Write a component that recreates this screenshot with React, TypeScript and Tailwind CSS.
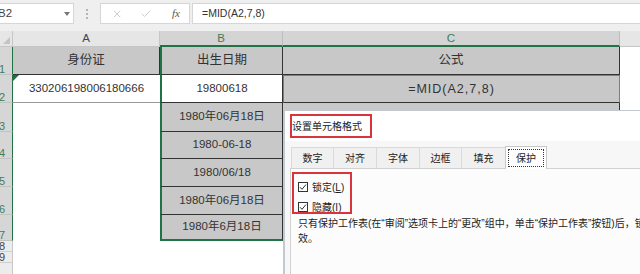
import React from "react";
import { X, Check } from "lucide-react";

const FONT = "font-['Liberation_Sans','Noto_Sans_CJK_SC',sans-serif]";

function RowHead({ label, h, sel }: { label: string; h: string; sel: boolean }) {
  return (
    <div
      className={`w-[13px] shrink-0 ${h} flex items-end overflow-hidden ${
        sel
          ? "bg-[#d6d6d6] border-r border-r-[#217346] border-b border-b-[#c2c2c2] text-[#3f7d5c]"
          : "bg-[#ececec] border-r border-r-[#c8c8c8] border-b border-b-[#cfcfcf] text-[#444]"
      }`}
    >
      <span className="ml-[-1px] text-[11px] leading-[12px] mb-[-1px]">{label}</span>
    </div>
  );
}

function BCell({ text, h, last }: { text: string; h: string; last?: boolean }) {
  return (
    <div
      className={`w-[123px] shrink-0 ${h} bg-[#c8c8c8] border-l-2 border-l-[#217346] border-r border-r-[#333] ${
        last ? "border-b-2 border-b-[#217346]" : "border-b border-b-[#333]"
      } flex items-center justify-center text-[11.5px] text-[#333]`}
    >
      {text}
    </div>
  );
}

function CheckBox() {
  return (
    <div className="w-[10px] h-[10px] border border-[#333] bg-white flex items-center justify-center">
      <svg width="8" height="8" viewBox="0 0 8 8">
        <path d="M1 4.2 L3 6.3 L7 1.5" fill="none" stroke="#333" strokeWidth="1" />
      </svg>
    </div>
  );
}

export default function App() {
  const tabs = [
    { t: "数字", w: "w-[42px]" },
    { t: "对齐", w: "w-[43px]" },
    { t: "字体", w: "w-[43px]" },
    { t: "边框", w: "w-[42px]" },
    { t: "填充", w: "w-[44px]" },
  ];
  const bRows = [
    { n: "3", h: "h-[29px]", t: "1980年06月18日" },
    { n: "4", h: "h-[27px]", t: "1980-06-18" },
    { n: "5", h: "h-[28px]", t: "1980/06/18" },
    { n: "6", h: "h-[28px]", t: "1980年06月18日" },
    { n: "7", h: "h-[26px]", t: "1980年6月18日" },
  ];
  return (
    <div className={`relative w-[640px] h-[274px] overflow-hidden bg-white ${FONT} text-[#333]`}>
      {/* formula bar */}
      <div className="flex h-[31px] bg-[#efefef] pt-[3px]">
        <div className="w-[74px] h-[21px] bg-white border-y border-r border-[#d6d6d6] flex items-center justify-between pr-[3px]">
          <span className="ml-[-2px] text-[11.5px] text-[#444]">B2</span>
          <span className="w-0 h-0 border-x-[3px] border-x-transparent border-t-[4px] border-t-[#777]" />
        </div>
        <div className="w-[26px] h-[21px] flex flex-col items-center justify-center gap-[2px]">
          <span className="w-[2px] h-[2px] bg-[#b5b5b5]" />
          <span className="w-[2px] h-[2px] bg-[#b5b5b5]" />
          <span className="w-[2px] h-[2px] bg-[#b5b5b5]" />
        </div>
        <div className="w-[90px] h-[21px] bg-white border border-[#d6d6d6] flex items-center">
          <X size={12} strokeWidth={1.5} color="#bdbdbd" className="ml-[10px]" />
          <Check size={12} strokeWidth={1.5} color="#bdbdbd" className="ml-[17px]" />
          <span className="ml-[20px] font-['Liberation_Serif',serif] italic text-[11px] text-[#555]">fx</span>
        </div>
        <div className="ml-[2px] flex-1 h-[21px] bg-white border-y border-l border-[#d6d6d6] flex items-center pl-[9px] text-[10.5px] text-[#333]">
          =MID(A2,7,8)
        </div>
      </div>

      {/* column headers */}
      <div className="flex h-[16px] text-[11.5px] leading-[15px]">
        <div className="w-[13px] bg-[#e6e6e6] border-r border-b border-[#c6c6c6] flex items-end justify-end p-[2px]">
          <span className="w-0 h-0 border-l-[7px] border-l-transparent border-b-[7px] border-b-[#c4c4c4]" />
        </div>
        <div className="w-[147px] bg-[#e6e6e6] border-r border-b border-[#c6c6c6] text-center text-[#444]">A</div>
        <div className="w-[123px] bg-[#d4d4d4] border-r border-r-[#bdbdbd] border-b-2 border-b-[#217346] text-center text-[#3f7d5c]">B</div>
        <div className="w-[337px] bg-[#d4d4d4] border-r border-r-[#bdbdbd] border-b-2 border-b-[#217346] text-center text-[#3f7d5c]">C</div>
        <div className="flex-1 bg-[#e6e6e6] border-b border-[#c6c6c6]" />
      </div>

      {/* row 1 */}
      <div className="flex">
        <RowHead label="1" h="h-[28px]" sel />
        <div className="w-[147px] h-[28px] bg-[#c8c8c8] border-r border-r-[#333] border-b border-b-[#333] flex items-center justify-center text-[12.5px]">身份证</div>
        <div className="w-[123px] h-[28px] bg-[#c8c8c8] border-l-2 border-l-[#217346] border-r border-r-[#333] border-b border-b-[#333] flex items-center justify-center text-[12.5px]">出生日期</div>
        <div className="w-[337px] h-[28px] bg-[#c8c8c8] border-r border-r-[#333] border-b border-b-[#333] flex items-center justify-center text-[12.5px]">公式</div>
        <div className="flex-1 h-[28px] bg-white" />
      </div>

      {/* row 2 */}
      <div className="flex">
        <RowHead label="2" h="h-[28px]" sel />
        <div className="relative w-[147px] h-[28px] bg-white border-b border-b-[#9a9a9a] flex items-center justify-center text-[11.5px]">
          <span className="absolute left-0 top-0 w-0 h-0 border-t-[6px] border-t-[#1e7145] border-r-[6px] border-r-transparent" />
          330206198006180666
        </div>
        <div className="w-[123px] h-[28px] bg-white border-l-2 border-l-[#217346] border-r border-r-[#333] border-b border-b-[#333] flex items-center justify-center text-[11.5px]">19800618</div>
        <div className="w-[337px] h-[28px] bg-[#c8c8c8] border border-[#4d9a6e] border-b-[#333] flex items-center justify-center text-[12.5px] tracking-[1px]">=MID(A2,7,8)</div>
        <div className="flex-1 h-[28px] bg-white" />
      </div>

      {/* rows 3-7 */}
      {bRows.map((r, i) => (
        <div className="flex" key={r.n}>
          <RowHead label={r.n} h={r.h} sel />
          <div className={`w-[147px] ${r.h} bg-white`} />
          <BCell text={r.t} h={r.h} last={i === bRows.length - 1} />
          <div className={`w-[337px] ${r.h} bg-[#c8c8c8] border-r border-[#333] border-b`} />
          <div className={`flex-1 ${r.h} bg-white`} />
        </div>
      ))}

      {/* rows 8-9 */}
      <div className="flex">
        <RowHead label="8" h="h-[11px]" sel={false} />
        <div className="flex-1 h-[11px] bg-white" />
      </div>
      <div className="flex">
        <RowHead label="9" h="h-[11px]" sel={false} />
        <div className="flex-1 h-[11px] bg-white" />
      </div>
      <div className="flex">
        <div className="w-[13px] h-[12px] bg-[#ececec] border-r border-[#c8c8c8]" />
      </div>

      {/* dialog */}
      <div className="absolute left-[283px] top-[110px] w-[420px] h-[190px] bg-[#f7f7f7] border-l-2 border-t border-[#c3c9cf] text-[10px] text-[#222]">
        <div className="h-[30px] bg-white flex items-center pl-[7px]">
          <span className="text-[10px]">设置单元格格式</span>
        </div>
        <div className="flex items-end h-[27px] pl-[6px]">
          {tabs.map((t) => (
            <div
              key={t.t}
              className={`${t.w} h-[21px] bg-[#f0f0f0] border-t border-l border-[#dadada] flex items-center justify-center`}
            >
              {t.t}
            </div>
          ))}
          <div className="w-[42px] h-[23px] bg-white border-t border-x border-[#c8c8c8] flex items-center justify-center p-[2px] mb-[-1px]">
            <div className="w-full h-full border border-dotted border-[#333] flex items-center justify-center">保护</div>
          </div>
        </div>
        <div className="ml-[5px] bg-[#fcfcfc] border-t border-l border-[#d2d2d2] h-[120px] pl-[7px] pt-[13px]">
          <div className="flex items-center gap-[4px] h-[10px]">
            <CheckBox />
            <span>
              锁定(<span className="underline">L</span>)
            </span>
          </div>
          <div className="flex items-center gap-[4px] h-[10px] mt-[10px]">
            <CheckBox />
            <span>
              隐藏(<span className="underline">I</span>)
            </span>
          </div>
          <div className="mt-[4px] text-[10px] leading-[15px] whitespace-nowrap">
            <div>只有保护工作表(在“审阅”选项卡上的“更改”组中，单击“保护工作表”按钮)后，锁定单元格或隐藏公式才有</div>
            <div>效。</div>
          </div>
        </div>
        {/* red highlight boxes */}
        <div className="absolute left-[5px] top-[3px] w-[82px] h-[24px] border-2 border-[#d9333b]" />
        <div className="absolute left-[7px] top-[61px] w-[60px] h-[42px] border-2 border-[#d9333b]" />
      </div>
    </div>
  );
}
